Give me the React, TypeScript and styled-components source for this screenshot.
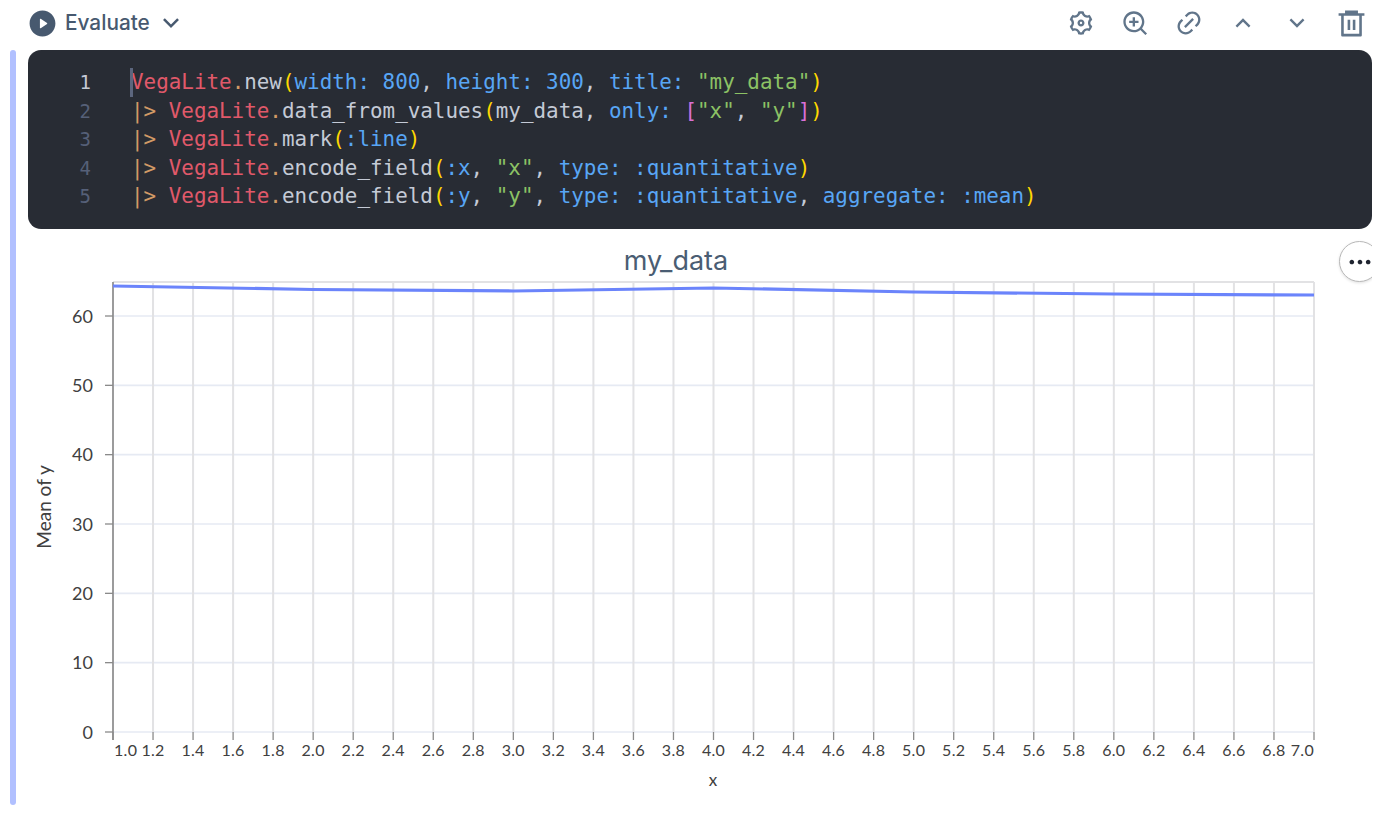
import React from "react";
import styled, { createGlobalStyle } from "styled-components";
import {
  RiSettings3Line,
  RiZoomInLine,
  RiLink,
  RiArrowUpSLine,
  RiArrowDownSLine,
  RiDeleteBin6Line,
  RiPlayCircleFill,
  RiMoreFill,
} from "react-icons/ri";

const Global = createGlobalStyle`
  html, body { margin: 0; padding: 0; background: #fff; overflow: hidden; height: 100%; }
  body { font-family: Inter, "Liberation Sans", sans-serif; }
`;

const Page = styled.div`
  width: 1386px;
  height: 825px;
  position: relative;
  overflow: hidden;
`;

const Toolbar = styled.header`
  height: 50px;
  padding: 0 8px 4px 30px;
  box-sizing: border-box;
  display: flex;
  align-items: center;
  justify-content: space-between;
`;

const EvaluateButton = styled.div`
  display: flex;
  align-items: center;
  gap: 7px;
  color: #47596f;
  font-size: 20.8px;
  font-weight: 500;
  line-height: 1;
  margin-left: -3px;
  & > svg:last-child {
    margin-left: -1px;
  }
`;

const IconRow = styled.div`
  display: flex;
  align-items: center;
`;

const IconButton = styled.span`
  width: 54px;
  height: 46px;
  display: flex;
  align-items: center;
  justify-content: center;
  color: #61758a;
`;

const Cell = styled.section`
  display: flex;
  gap: 12px;
  padding-left: 10px;
  height: 755px;
`;

const Bar = styled.div`
  width: 6px;
  border-radius: 3px;
  background: #b1c0ff;
  flex: none;
`;

const Body = styled.div`
  flex: none;
  width: 1344px;
  display: flex;
  flex-direction: column;
`;

const Editor = styled.pre`
  margin: 0;
  height: 179px;
  box-sizing: border-box;
  padding: 18px 0 0;
  background: #282c34;
  border-radius: 13px;
  display: flex;
  font-family: "DejaVu Sans Mono", "Liberation Mono", monospace;
  font-size: 20.9px;
  line-height: 28.6px;
  position: relative;
  letter-spacing: 0;
  font-variant-ligatures: none;
`;

const Gutter = styled.div`
  width: 103px;
  flex: none;
  box-sizing: border-box;
  padding-right: 40px;
  text-align: right;
  font-size: 19px;
`;

const LineNo = styled.div<{ $active?: boolean }>`
  color: ${(p) => (p.$active ? "#c4cad6" : "#566078")};
`;

const Code = styled.code`
  font: inherit;
  color: #c4cad6;
  display: block;
`;

const Line = styled.div`
  height: 28.6px;
  white-space: pre;
`;

const Tok = styled.span<{ $c: string }>`
  color: ${(p) => p.$c};
`;

const Caret = styled.span`
  position: absolute;
  left: 102px;
  top: 18px;
  width: 3px;
  height: 29px;
  background: #5c667e;
`;

const ChartFrame = styled.svg`
  display: block;
  width: 1344px;
  height: 576px;
  flex: none;
`;

const ChartTitle = styled.text`
  font-family: Inter, "Liberation Sans", sans-serif;
  font-size: 27px;
  fill: #4a5d73;
  text-anchor: middle;
`;

const AxisText = styled.text<{ $size: number; $anchor?: string; $spacing?: number }>`
  font-family: Lato, "Liberation Sans", sans-serif;
  font-size: ${(p) => p.$size}px;
  letter-spacing: ${(p) => p.$spacing ?? 0}px;
  fill: #404040;
  text-anchor: ${(p) => p.$anchor ?? "middle"};
`;

const MoreClip = styled.div`
  position: absolute;
  left: 1335px;
  top: 237px;
  width: 37px;
  height: 50px;
  padding: 4px;
  box-sizing: border-box;
  overflow: hidden;
`;

const MoreButton = styled.span`
  width: 41px;
  height: 41px;
  border-radius: 50%;
  background: #fff;
  border: 1px solid #b8b8b8;
  box-shadow: 0 1px 3px rgba(0, 0, 0, 0.12);
  box-sizing: border-box;
  display: flex;
  align-items: center;
  justify-content: center;
  color: #1f2430;
`;

const R = "#e0596a";
const B = "#58a6f5";
const G = "#8cc265";
const Y = "#ffd700";
const M = "#da70d6";
const O = "#d19a66";
const F = "#c4cad6";

type T = [string, string];
const pipe: T = ["|> ", O];
const vl: T[] = [["VegaLite", R], [".", O]];

const lines: T[][] = [
  [...vl, ["new", F], ["(", Y], ["width: 800", B], [", ", F], ["height: 300", B], [", ", F], ["title: ", B], ['"my_data"', G], [")", Y]],
  [pipe, ...vl, ["data_from_values", F], ["(", Y], ["my_data, ", F], ["only: ", B], ["[", M], ['"x"', G], [", ", F], ['"y"', G], ["]", M], [")", Y]],
  [pipe, ...vl, ["mark", F], ["(", Y], [":line", B], [")", Y]],
  [pipe, ...vl, ["encode_field", F], ["(", Y], [":x", B], [", ", F], ['"x"', G], [", ", F], ["type: :quantitative", B], [")", Y]],
  [pipe, ...vl, ["encode_field", F], ["(", Y], [":y", B], [", ", F], ['"y"', G], [", ", F], ["type: :quantitative", B], [", ", F], ["aggregate: :mean", B], [")", Y]],
];

const X0 = 113;
const X1 = 1314;
const Y0 = 732;
const Ytop = 282;
const xAt = (v: number) => X0 + ((v - 1) / 6) * (X1 - X0);
const yAt = (v: number) => Y0 - (v / 60) * (Y0 - 316);
const xTicks = Array.from({ length: 31 }, (_, i) => 1 + i * 0.2);
const yTicks = [0, 10, 20, 30, 40, 50, 60];
const series: [number, number][] = [
  [1, 286], [2, 289.5], [3, 291], [4, 288], [5, 292], [6, 294], [7, 295],
];

export default function App() {
  return (
    <Page>
      <Global />
      <Toolbar>
        <EvaluateButton>
          <RiPlayCircleFill size={31} />
          <span>Evaluate</span>
          <RiArrowDownSLine size={30} />
        </EvaluateButton>
        <IconRow>
          <IconButton><RiSettings3Line size={28} /></IconButton>
          <IconButton><RiZoomInLine size={28} /></IconButton>
          <IconButton><RiLink size={28} /></IconButton>
          <IconButton><RiArrowUpSLine size={28} /></IconButton>
          <IconButton><RiArrowDownSLine size={28} /></IconButton>
          <IconButton><RiDeleteBin6Line size={31} /></IconButton>
        </IconRow>
      </Toolbar>
      <Cell>
        <Bar />
        <Body>
          <Editor>
            <Gutter>
              {lines.map((_, i) => (
                <LineNo key={i} $active={i === 0}>{i + 1}</LineNo>
              ))}
            </Gutter>
            <Code>
              {lines.map((l, i) => (
                <Line key={i}>
                  {l.map(([t, c], j) => (
                    <Tok key={j} $c={c}>{t}</Tok>
                  ))}
                </Line>
              ))}
            </Code>
            <Caret />
          </Editor>
          <ChartFrame viewBox="28 229 1344 576">
            <ChartTitle x={676} y={270}>my_data</ChartTitle>
            {yTicks.map((v) => (
              <line key={v} x1={X0} x2={X1} y1={yAt(v)} y2={yAt(v)} stroke="#e6eaf3" strokeWidth={1.6} />
            ))}
            {xTicks.map((v) => (
              <line key={v} x1={xAt(v)} x2={xAt(v)} y1={Ytop} y2={Y0} stroke="#e2e2e4" strokeWidth={2} />
            ))}
            <line x1={X0} x2={X1} y1={Ytop} y2={Ytop} stroke="#e2e2e4" strokeWidth={2} />
            <line x1={X0} x2={X0} y1={Ytop} y2={Y0 + 8} stroke="#8a8a8a" strokeWidth={1.6} />
            {yTicks.map((v) => (
              <g key={v}>
                <line x1={105} x2={X0} y1={yAt(v)} y2={yAt(v)} stroke="#8a8a8a" strokeWidth={1.3} />
                <AxisText $size={18} $anchor="end" x={93} y={yAt(v) + 6.5}>{v}</AxisText>
              </g>
            ))}
            {xTicks.map((v, i) => (
              <g key={v}>
                <line x1={xAt(v)} x2={xAt(v)} y1={Y0} y2={Y0 + 8} stroke="#8a8a8a" strokeWidth={1.3} />
                <AxisText
                  $size={16}
                  $spacing={0.3}
                  $anchor={i === 0 ? "start" : i === 30 ? "end" : "middle"}
                  x={i === 0 ? xAt(v) + 1 : xAt(v)}
                  y={756}
                >
                  {v.toFixed(1)}
                </AxisText>
              </g>
            ))}
            <polyline
              points={series.map(([x, y]) => `${xAt(x)},${y}`).join(" ")}
              fill="none"
              stroke="#6b84fb"
              strokeWidth={3.2}
            />
            <AxisText $size={17} x={713} y={786}>x</AxisText>
            <AxisText $size={19} x={0} y={0} transform="translate(51 507) rotate(-90)">Mean of y</AxisText>
          </ChartFrame>
        </Body>
      </Cell>
      <MoreClip>
        <MoreButton><RiMoreFill size={28} /></MoreButton>
      </MoreClip>
    </Page>
  );
}
